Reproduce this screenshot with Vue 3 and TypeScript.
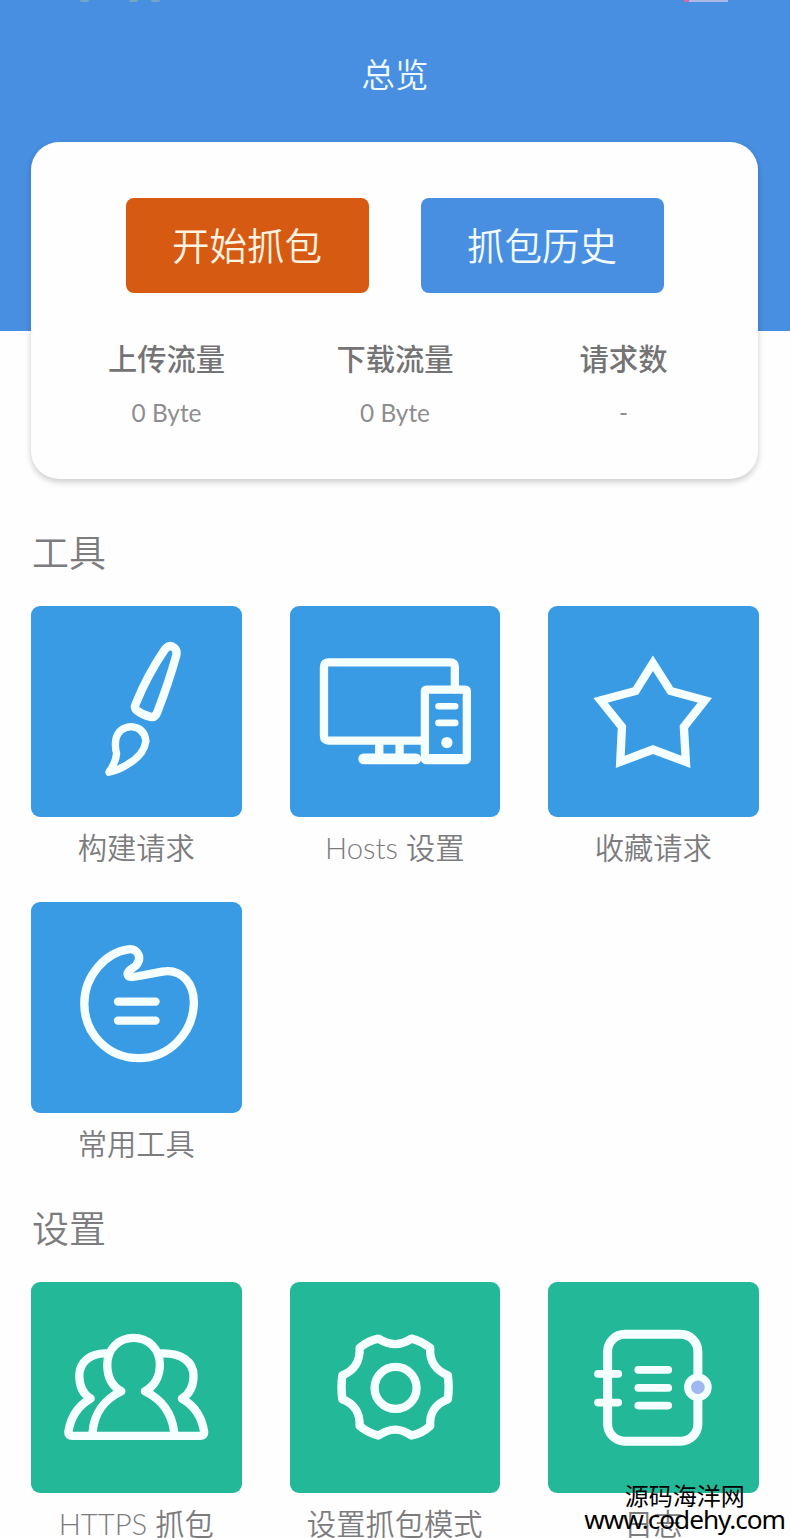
<script setup lang="ts">
interface Stat { name: string; value: string }
interface Tool { label: string; icon: string; box: string }

const stats: Stat[] = [
  { name: '上传流量', value: '0 Byte' },
  { name: '下载流量', value: '0 Byte' },
  { name: '请求数', value: '-' },
]

const sections: { title: string; tone: string; items: Tool[] }[] = [
  {
    title: '工具',
    tone: 'blue',
    items: [
      { label: '构建请求', icon: 'brush', box: '3 18 632 632' },
      { label: 'Hosts 设置', icon: 'computer', box: '15 18 632 632' },
      { label: '收藏请求', icon: 'star', box: '15 18 632 632' },
      { label: '常用工具', icon: 'kit', box: '3 21 632 632' },
    ],
  },
  {
    title: '设置',
    tone: 'green',
    items: [
      { label: 'HTTPS 抓包', icon: 'people', box: '33 276 632 632' },
      { label: '设置抓包模式', icon: 'gear', box: '15 36 632 632' },
      { label: '日志', icon: 'notebook', box: '15 36 632 632' },
    ],
  },
]
</script>

<template>
  <main class="page">
    <header class="header">
      <div class="status"><div class="left"><i></i><i></i><i></i></div><i class="battery"></i></div>
      <h1>总览</h1>
    </header>

    <section class="card">
      <div class="actions">
        <button class="start">开始抓包</button>
        <button class="history">抓包历史</button>
      </div>
      <div class="stats">
        <div v-for="s in stats" :key="s.name" class="stat">
          <b>{{ s.name }}</b>
          <span>{{ s.value }}</span>
        </div>
      </div>
    </section>

    <section v-for="sec in sections" :key="sec.title" class="group">
      <h2>{{ sec.title }}</h2>
      <div class="grid">
        <div v-for="t in sec.items" :key="t.label" class="item">
          <div class="tile" :class="sec.tone">
            <svg :viewBox="t.box">
              <template v-if="t.icon === 'brush'">
                <path d="M406 147 Q420 132 433 143 Q443 151 439 167 Q416 250 382 337 Q376 354 362 351 Q337 345 320 331 Q312 324 317 313 Q353 224 406 147Z" />
                <path d="M237 517 Q257 489 260 461 Q254 441 258 417 Q266 383 303 380 Q344 383 348 424 Q342 466 292 494 Q265 511 237 517Z" stroke-width="22" />
              </template>
              <template v-else-if="t.icon === 'computer'">
                <path d="M510 268 V201 Q510 187 496 187 H131 Q117 187 117 201 V408 Q117 422 131 422 H416" />
                <path d="M283 428 V470 M344 428 V470" />
                <path d="M236 477 H393" stroke-width="32" />
                <rect x="420" y="269" width="126" height="212" rx="4" />
                <path d="M432 477 H535" stroke-width="30" />
                <path d="M461 319 H511 M461 369 H511" stroke-width="20" />
                <circle cx="486" cy="428" r="17" class="solid" />
              </template>
              <path v-else-if="t.icon === 'star'" class="sharp" d="M330 190 L383 273 L486 301 L423 381 L429 486 L330 449 L232 486 L237 381 L173 301 L278 273Z" />
              <template v-else-if="t.icon === 'kit'">
                <path d="M296 163 C326 159 337 191 318 212 C308 222 293 224 293 237 C295 249 308 247 323 244 L397 230 C459 220 493 270 492 326 C489 414 418 490 327 490 C234 490 163 416 163 326 C163 240 230 171 296 163Z" />
                <path d="M264 320 H377 M264 377 H377" />
              </template>
              <template v-else-if="t.icon === 'people'">
                <path d="M304 604 C274 588 262 558 262 524 C262 477 297 444 341 444 C385 444 420 477 420 524 C420 558 405 588 375 604 C425 628 456 671 463 727 M304 604 C254 628 222 671 218 727" />
                <path d="M268 491 C211 486 178 517 178 558 C178 590 191 613 212 626 C173 648 152 680 145 727 Q144 738 157 738 H541 Q554 738 553 727 C546 680 525 648 486 626 C507 613 521 590 521 558 C521 517 486 486 416 491" />
              </template>
              <template v-else-if="t.icon === 'gear'">
                <path d="M280 206 C317 228 345 228 380 206 C402 211 420 222 436 234 C433 273 453 302 489 316 Q494 353 489 388 C453 401 433 430 436 468 C420 483 402 492 380 497 C345 473 317 473 280 497 C258 491 240 482 224 468 C226 430 208 401 172 388 Q167 353 172 316 C208 302 226 273 224 234 C240 220 258 210 280 206Z" />
                <circle cx="332" cy="354" r="63" />
              </template>
              <template v-else>
                <rect x="194" y="193" width="271" height="321" rx="52" stroke-width="27" />
                <path d="M165 312 H226 M165 398 H226" stroke-width="23" />
                <path d="M286 300 H376 M286 354 H376 M286 407 H376" stroke-width="23" />
                <circle cx="465" cy="352" r="31" class="knob" />
              </template>
            </svg>
          </div>
          <p>{{ t.label }}</p>
        </div>
      </div>
    </section>

    <aside class="mark">
      <div>源码海洋网</div>
      <div class="site">www.codehy.com</div>
    </aside>
  </main>
</template>

<style>
html, body { background: #fefefe; overflow: hidden; }
</style>

<style scoped>
.page {
  position: relative;
  width: 790px;
  height: 1538px;
  overflow: hidden;
  background: #fefefe;
  color: #7c7c7e;
  font-family: Lato, "Noto Sans CJK SC", sans-serif;
  font-weight: 350;
}
.header { height: 331px; background: #488fe2; }
.status {
  display: flex;
  justify-content: space-between;
  height: 3px;
  padding: 0 62px 0 80px;
}
.status i { display: block; height: 2px; }
.left { display: flex; justify-content: space-between; width: 80px; }
.left i { width: 9px; border-radius: 0 0 4px 4px; background: #75a5c4; }
.left i:nth-child(2) { margin-left: 26px; }
.battery { width: 44px; background: linear-gradient(90deg, #d9669a 0 5px, #a9b9e8 5px); }
h1 {
  margin: 0;
  padding-top: 46px;
  text-align: center;
  font-size: 33.5px;
  line-height: 50px;
  font-weight: 350;
  color: #f0f9ff;
}
.card {
  box-sizing: border-box;
  width: 727px;
  height: 337px;
  margin: -189px 0 0 31px;
  padding-top: 56px;
  border-radius: 28px;
  background: #fefefe;
  box-shadow: 0 3px 6px rgba(0, 0, 0, 0.2);
}
.actions { display: flex; justify-content: center; gap: 52px; }
button {
  width: 243px;
  height: 95px;
  padding: 0;
  border: 0;
  border-radius: 8px;
  font: 350 37.5px/95px Lato, "Noto Sans CJK SC", sans-serif;
  color: #f4fbff;
}
.start { background: #d75a12; color: #fff3e2; }
.history { background: #488fe2; }
.stats { display: grid; grid-template-columns: repeat(3, 228.5px); justify-content: center; padding: 44px 0 0 1px; }
.stat { display: flex; flex-direction: column; align-items: center; }
.stat b { font-size: 29.3px; line-height: 44px; font-weight: 500; color: #747476; }
.stat span { padding-top: 12px; font-size: 24.4px; line-height: 40px; font-weight: 400; color: #8e8e90; }
.group h2 { margin: 0; padding-left: 32px; font-size: 37px; line-height: 54px; font-weight: 350; }
.group { padding-top: 47px; }
.grid {
  display: grid;
  grid-template-columns: repeat(3, 210.5px);
  column-gap: 48px;
  row-gap: 30px;
  padding: 26px 0 0 31px;
}
.item { height: 266px; }
.group + .group { padding-top: 34px; }
.tile { height: 210.5px; border-radius: 9px; }
.blue { background: #389be4; }
.green { background: #22b898; }
svg {
  display: block;
  width: 100%;
  height: 100%;
  fill: none;
  stroke: #f5ffff;
  stroke-width: 25;
  stroke-linecap: round;
  stroke-linejoin: round;
}
.sharp { stroke-linejoin: miter; stroke-miterlimit: 3; }
.solid { fill: #f5ffff; stroke: none; }
.knob { fill: #9db9ef; stroke-width: 21; }
.item p {
  margin: 9.5px -20px 0;
  text-align: center;
  font-size: 29.3px;
  line-height: 44px;
  white-space: nowrap;
}
.mark {
  position: absolute;
  right: 5px;
  bottom: 8px;
  color: #000;
  text-align: center;
  font: 400 24px/24px "Noto Sans", "Noto Sans CJK SC", sans-serif;
}
.site { font-size: 26.2px; line-height: 22px; letter-spacing: -1.05px; }
</style>
